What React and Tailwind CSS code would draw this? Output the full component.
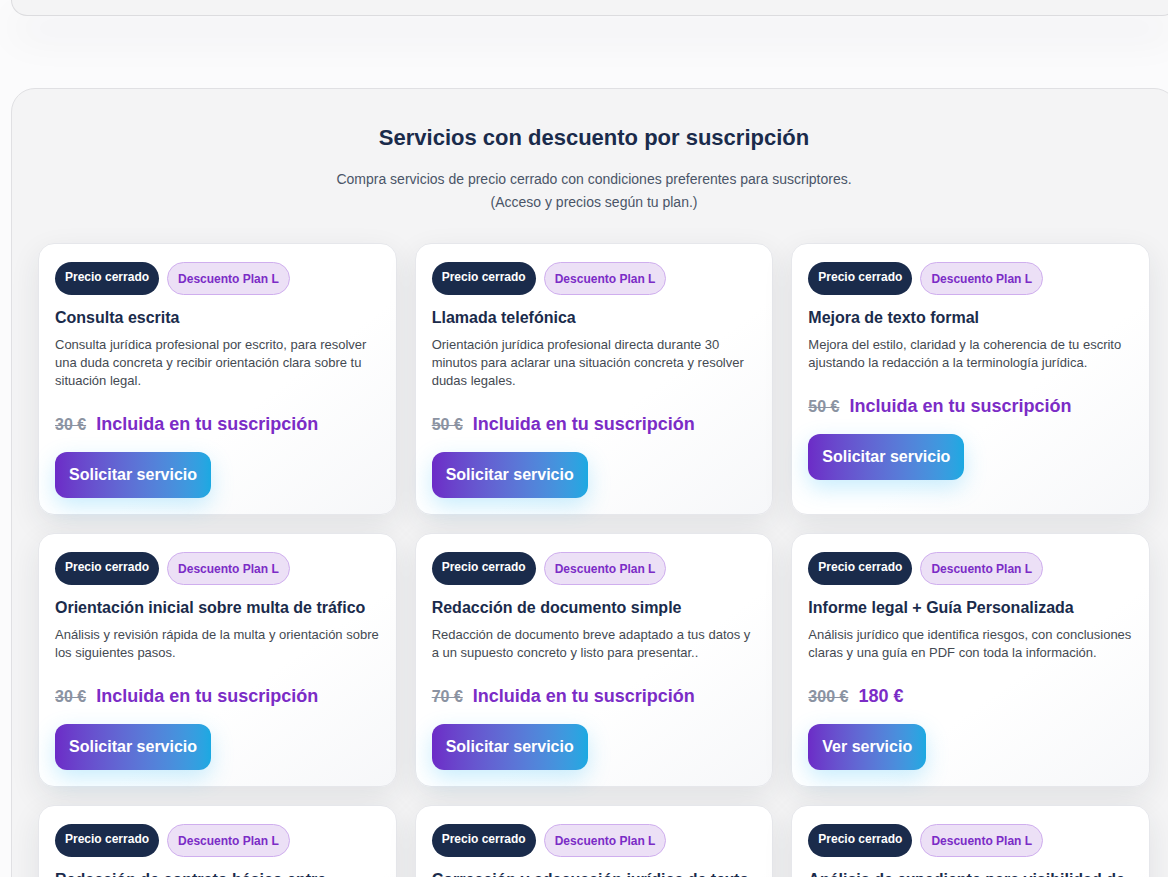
import React from "react";

const SERVICES = [
  {
    title: "Consulta escrita",
    description:
      "Consulta jurídica profesional por escrito, para resolver una duda concreta y recibir orientación clara sobre tu situación legal.",
    oldPrice: "30 €",
    price: "Incluida en tu suscripción",
    cta: "Solicitar servicio",
  },
  {
    title: "Llamada telefónica",
    description:
      "Orientación jurídica profesional directa durante 30 minutos para aclarar una situación concreta y resolver dudas legales.",
    oldPrice: "50 €",
    price: "Incluida en tu suscripción",
    cta: "Solicitar servicio",
  },
  {
    title: "Mejora de texto formal",
    description:
      "Mejora del estilo, claridad y la coherencia de tu escrito ajustando la redacción a la terminología jurídica.",
    oldPrice: "50 €",
    price: "Incluida en tu suscripción",
    cta: "Solicitar servicio",
  },
  {
    title: "Orientación inicial sobre multa de tráfico",
    description:
      "Análisis y revisión rápida de la multa y orientación sobre los siguientes pasos.",
    oldPrice: "30 €",
    price: "Incluida en tu suscripción",
    cta: "Solicitar servicio",
  },
  {
    title: "Redacción de documento simple",
    description:
      "Redacción de documento breve adaptado a tus datos y a un supuesto concreto y listo para presentar..",
    oldPrice: "70 €",
    price: "Incluida en tu suscripción",
    cta: "Solicitar servicio",
  },
  {
    title: "Informe legal + Guía Personalizada",
    description:
      "Análisis jurídico que identifica riesgos, con conclusiones claras y una guía en PDF con toda la información.",
    oldPrice: "300 €",
    price: "180 €",
    cta: "Ver servicio",
  },
  {
    title: "Redacción de contrato básico entre particulares",
    description:
      "Contrato sencillo entre particulares redactado a medida, con las cláusulas esenciales para proteger a ambas partes.",
    oldPrice: "90 €",
    price: "Incluida en tu suscripción",
    cta: "Solicitar servicio",
  },
  {
    title: "Corrección y adecuación jurídica de texto legal",
    description:
      "Revisión de tu texto para corregir errores y adaptarlo al lenguaje jurídico adecuado.",
    oldPrice: "60 €",
    price: "Incluida en tu suscripción",
    cta: "Solicitar servicio",
  },
  {
    title: "Análisis de expediente para visibilidad de riesgos",
    description:
      "Estudio del expediente completo para detectar puntos débiles y riesgos antes de actuar.",
    oldPrice: "150 €",
    price: "120 €",
    cta: "Ver servicio",
  },
];

function ServiceCard({ service }) {
  return (
    <div className="rounded-[16px] border border-[#e6e7eb] bg-linear-to-br from-white from-60% to-[#f6f7f9] px-[16px] pt-[18px] pb-[16px] shadow-[0_10px_30px_rgba(30,41,59,0.09)]">
      <div className="flex items-center gap-[8px]">
        <span className="rounded-full bg-[#1a2b4b] px-[10px] pt-[7px] pb-[10px] text-[12px] leading-[16px] font-bold text-white">
          Precio cerrado
        </span>
        <span className="rounded-full border border-[#cfaeee] bg-[#ece0f6] px-[10px] py-[7.5px] text-[12px] leading-[16px] font-bold text-[#7b2cc6]">
          Descuento Plan L
        </span>
      </div>
      <h3 className="mt-[11px] text-[16px] leading-[24px] font-bold text-[#1a2b4b]">{service.title}</h3>
      <p className="mt-[6px] text-[13px] leading-[18px] text-[#444a52]">{service.description}</p>
      <div className="mt-[20px] flex items-baseline gap-[10px]">
        <span className="text-[16px] leading-[28px] font-bold text-[#8b93a2] line-through">{service.oldPrice}</span>
        <span className="text-[18px] leading-[28px] font-bold text-[#7b2cc6]">{service.price}</span>
      </div>
      <button
        type="button"
        className="mt-[13px] rounded-[12px] bg-linear-to-r from-[#6c2bc7] to-[#1aa9e2] px-[14px] py-[11px] text-[16px] leading-[24px] font-bold text-white shadow-[0_8px_22px_rgba(56,189,248,0.28)]"
      >
        {service.cta}
      </button>
    </div>
  );
}

export default function App() {
  return (
    <div className="min-h-screen overflow-hidden bg-[#fbfbfc] font-['Liberation_Sans',Arial,sans-serif]">
      <div className="ml-[11px] w-[1167px]">
        {/* bottom edge of the previous section */}
        <div className="h-[16px] rounded-b-[20px] border-x border-b border-[#dcdcdf] bg-[#f4f4f5] shadow-[0_20px_40px_rgba(30,41,59,0.07)]" />

        <section className="mt-[72px] rounded-[24px] border border-[#e0e0e3] bg-[#f4f4f5] pr-[27px] pl-[26px] pt-[35px] pb-[40px]">
          <h2 className="text-center text-[22px] leading-[28px] font-bold text-[#1a2b4b]">
            Servicios con descuento por suscripción
          </h2>
          <p className="mt-[16px] text-center text-[14px] leading-[23px] text-[#4a5568]">
            Compra servicios de precio cerrado con condiciones preferentes para suscriptores.
            <br />
            (Acceso y precios según tu plan.)
          </p>

          <div className="mt-[29px] grid grid-cols-3 gap-[18px]">
            {SERVICES.map((s) => (
              <ServiceCard key={s.title} service={s} />
            ))}
          </div>
        </section>
      </div>
    </div>
  );
}
